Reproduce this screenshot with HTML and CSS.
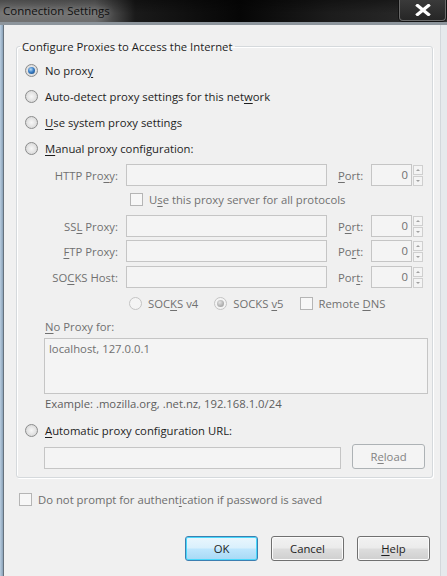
FILE: index.html
```html
<!DOCTYPE html>
<html lang="en">
<head>
  <meta charset="UTF-8">
  <title>Connection Settings</title>
  <link rel="stylesheet" href="styles.css">
</head>
<body>
  <div class="window">
    <div class="titlebar">
      <span class="title">Connection Settings</span>
      <span class="close">
        <svg width="16" height="12" viewBox="0 0 16 12"><path d="M2.5 1.5 L13.5 10.5 M13.5 1.5 L2.5 10.5" stroke="#fff" stroke-width="3.2" stroke-linecap="square"/></svg>
      </span>
    </div>
    <div class="frame">
      <div class="edge-left"></div>
      <div class="client">
        <fieldset class="group">
          <legend>Configure Proxies to Access the Internet</legend>

          <div class="opt"><span class="radio checked"></span><span>No prox<u>y</u></span></div>
          <div class="opt"><span class="radio"></span><span>Auto-detect proxy settings for this net<u>w</u>ork</span></div>
          <div class="opt"><span class="radio"></span><span><u>U</u>se system proxy settings</span></div>
          <div class="opt"><span class="radio"></span><span><u>M</u>anual proxy configuration:</span></div>

          <div class="manual">
            <div class="proxy-row">
              <span class="plabel">HTTP Pro<u>x</u>y:</span>
              <span class="field host"></span>
              <span class="port-label"><u>P</u>ort:</span>
              <span class="field port">0</span>
              <span class="spin"><span class="up"></span><span class="down"></span></span>
            </div>
            <div class="sub-row all">
              <span class="check off"></span><span>U<u>s</u>e this proxy server for all protocols</span>
            </div>
            <div class="proxy-row">
              <span class="plabel">SS<u>L</u> Proxy:</span>
              <span class="field host"></span>
              <span class="port-label">P<u>o</u>rt:</span>
              <span class="field port">0</span>
              <span class="spin"><span class="up"></span><span class="down"></span></span>
            </div>
            <div class="proxy-row">
              <span class="plabel"><u>F</u>TP Proxy:</span>
              <span class="field host"></span>
              <span class="port-label">Po<u>r</u>t:</span>
              <span class="field port">0</span>
              <span class="spin"><span class="up"></span><span class="down"></span></span>
            </div>
            <div class="proxy-row socks">
              <span class="plabel">SO<u>C</u>KS Host:</span>
              <span class="field host"></span>
              <span class="port-label">Por<u>t</u>:</span>
              <span class="field port">0</span>
              <span class="spin"><span class="up"></span><span class="down"></span></span>
            </div>
            <div class="sub-row versions">
              <span class="radio off"></span><span>SOC<u>K</u>S v4</span>
              <span class="radio off checked gap"></span><span>SOCKS <u>v</u>5</span>
              <span class="check off gap"></span><span>Remote <u>D</u>NS</span>
            </div>
          </div>

          <div class="no-proxy">
            <div class="np-label"><u>N</u>o Proxy for:</div>
            <div class="textarea">localhost, 127.0.0.1</div>
            <div class="example">Example: .mozilla.org, .net.nz, 192.168.1.0/24</div>
          </div>

          <div class="opt auto"><span class="radio"></span><span><u>A</u>utomatic proxy configuration URL:</span></div>
          <div class="url-row">
            <span class="field url"></span>
            <span class="btn disabled">R<u>e</u>load</span>
          </div>
        </fieldset>

        <div class="auth">
          <span class="check off"></span><span>Do not prompt for authent<u>i</u>cation if password is saved</span>
        </div>

        <div class="buttons">
          <span class="btn default">OK</span>
          <span class="btn">Cancel</span>
          <span class="btn"><u>H</u>elp</span>
        </div>
      </div>
      <div class="edge-right"></div>
    </div>
  </div>
</body>
</html>
```

FILE: styles.css
```css
body {
  margin: 0;
  font-family: 'Open Sans', sans-serif;
  font-size: 11.3px;
  color: #1e1e1e;
  background: #f0f0f0;
}

u {
  text-decoration-thickness: 1px;
  text-underline-offset: 2px;
}

.window {
  display: flex;
  flex-direction: column;
  width: 447px;
  height: 576px;
}

/* title bar */
.titlebar {
  display: flex;
  align-items: flex-start;
  height: 22px;
  background:
    linear-gradient(to bottom, rgba(0,0,0,0.35), rgba(0,0,0,0) 60%),
    linear-gradient(to right, #737373 0, #6e6e6e 95px, #1a1a1a 135px, #060606 240px, #1c1c1c 330px, #2e2e2e 447px);
  border-bottom: 3px solid #8d959c;
}

.title {
  padding: 3px 0 0 3px;
  font-size: 11.5px;
  color: #101010;
  text-shadow: 0 0 6px rgba(255, 255, 255, 0.35);
}

.close {
  margin-left: auto;
  margin-right: 1px;
  width: 45px;
  height: 20px;
  display: flex;
  align-items: center;
  justify-content: center;
  background: linear-gradient(#3a3a3a, #262626);
  border: 1px solid #6a6a6a;
  border-top: none;
  border-radius: 0 0 4px 4px;
  box-shadow: 0 0 0 1px #111;
}

.frame {
  display: flex;
  flex: 1;
}

.edge-left {
  width: 3px;
  background: linear-gradient(to right, #b9cde0, #8aa2b8);
  border-right: 1px solid #66727d;
}

.edge-right {
  width: 6px;
  background: #e6e9ec;
  border-left: 1px solid #d3d7db;
}

.client {
  flex: 1;
  display: flex;
  flex-direction: column;
  padding: 0 7px 0 12px;
}

/* group box */
.group {
  margin: 14px 0 0;
  padding: 3px 4px 8px 8px;
  border: 1px solid #d5d9dc;
  border-radius: 3px;
  box-shadow: inset 1px 1px 0 #fff, 1px 1px 0 #fff;
  min-width: 0;
}

.group legend {
  margin-left: -5px;
  padding: 0 3px 0 2px;
  line-height: 15px;
  color: #1e1e1e;
}

.opt {
  display: flex;
  align-items: center;
  gap: 7px;
  height: 26px;
}

/* radios and checks */
.radio {
  position: relative;
  flex: none;
  width: 13px;
  height: 13px;
  box-sizing: border-box;
  border-radius: 50%;
  border: 1px solid #8b8c8c;
  background: radial-gradient(circle, #f7f7f7 0, #e2e2e2 55%, #cfcfcf 100%);
}

.radio.checked::after {
  content: "";
  position: absolute;
  left: 2px;
  top: 2px;
  width: 7px;
  height: 7px;
  border-radius: 50%;
  background: radial-gradient(circle at 40% 35%, #b7dcf6 0, #3b7fc7 45%, #12406f 100%);
}

.radio.off {
  border-color: #c4c4c4;
  background: #f4f4f4;
}

.radio.off.checked::after {
  background: radial-gradient(circle at 40% 35%, #e4e4e4 0, #b0b0b0 60%, #9a9a9a 100%);
}

.check {
  flex: none;
  width: 13px;
  height: 13px;
  box-sizing: border-box;
  border: 1px solid #8e8f8f;
  background: linear-gradient(135deg, #e0e0e0, #fafafa);
}

.check.off {
  border-color: #b5b5b5;
  background: #f7f7f7;
}

/* manual proxy block */
.manual {
  display: flex;
  flex-direction: column;
  padding-left: 20px;
  color: #707070;
}

.proxy-row {
  display: flex;
  align-items: center;
  height: 22px;
  margin-top: 3px;
}

.proxy-row.socks {
  margin-top: 4px;
}

.plabel {
  width: 73px;
  text-align: right;
  margin-right: 8px;
}

.field {
  box-sizing: border-box;
  height: 22px;
  border: 1px solid #c5c5c5;
  background: #f4f4f4;
}

.host {
  width: 201px;
}

.port-label {
  margin: 0 9px 0 11px;
  width: 24px;
}

.port {
  width: 41px;
  padding-right: 3px;
  text-align: right;
  line-height: 20px;
}

.spin {
  display: flex;
  flex-direction: column;
  gap: 1px;
  margin-left: 1px;
  width: 10px;
  height: 21px;
}

.spin span {
  flex: 1;
  box-sizing: border-box;
  border: 1px solid #cfcfcf;
  background: #f4f4f4;
  display: flex;
  align-items: center;
  justify-content: center;
}

.spin .up::after,
.spin .down::after {
  content: "";
  border-left: 2px solid transparent;
  border-right: 2px solid transparent;
}

.spin .up::after {
  border-bottom: 2px solid #a0a0a0;
}

.spin .down::after {
  border-top: 2px solid #a0a0a0;
}

.sub-row {
  display: flex;
  align-items: center;
  padding-left: 85px;
  gap: 6px;
}

.sub-row.all {
  height: 26px;
}

.sub-row.versions {
  height: 30px;
  padding-left: 84px;
}

.sub-row .gap {
  margin-left: 10px;
}

/* exceptions */
.no-proxy {
  display: flex;
  flex-direction: column;
  padding: 0 0 0 19px;
  color: #707070;
}

.np-label {
  height: 18px;
  line-height: 18px;
  padding-left: 1px;
  margin-bottom: 2px;
}

.textarea {
  box-sizing: border-box;
  height: 56px;
  width: 384px;
  padding: 2px 4px;
  border: 1px solid #c5c5c5;
  background: #f4f4f4;
}

.example {
  height: 20px;
  line-height: 20px;
  padding-left: 1px;
  color: #5e5e5e;
}

.opt.auto {
  margin-top: 3px;
}

.url-row {
  display: flex;
  align-items: flex-end;
  padding-left: 19px;
  height: 26px;
}

.url {
  width: 297px;
}

/* buttons */
.btn {
  box-sizing: border-box;
  width: 73px;
  height: 25px;
  display: flex;
  align-items: center;
  justify-content: center;
  border: 1px solid #707070;
  border-radius: 3px;
  background: linear-gradient(#f2f2f2 0, #ebebeb 48%, #dddddd 52%, #cfcfcf 100%);
  box-shadow: inset 0 0 0 1px #fbfbfb;
}

.btn.disabled {
  margin-left: 11px;
  border-color: #adb2b5;
  background: #f4f4f4;
  box-shadow: none;
  color: #838383;
}

.btn.default {
  border-color: #3c7fb1;
  box-shadow: inset 0 0 0 1px #48d8fb;
  background: linear-gradient(#eaf6fd 0, #d9f0fc 48%, #bee6fd 52%, #a7d9f5 100%);
}

.auth {
  display: flex;
  align-items: center;
  gap: 6px;
  height: 26px;
  margin-top: 8px;
  padding-left: 3px;
  color: #6d6d6d;
}

.buttons {
  display: flex;
  justify-content: flex-end;
  gap: 13px;
  margin-top: 24px;
  padding-right: 3px;
}
```
